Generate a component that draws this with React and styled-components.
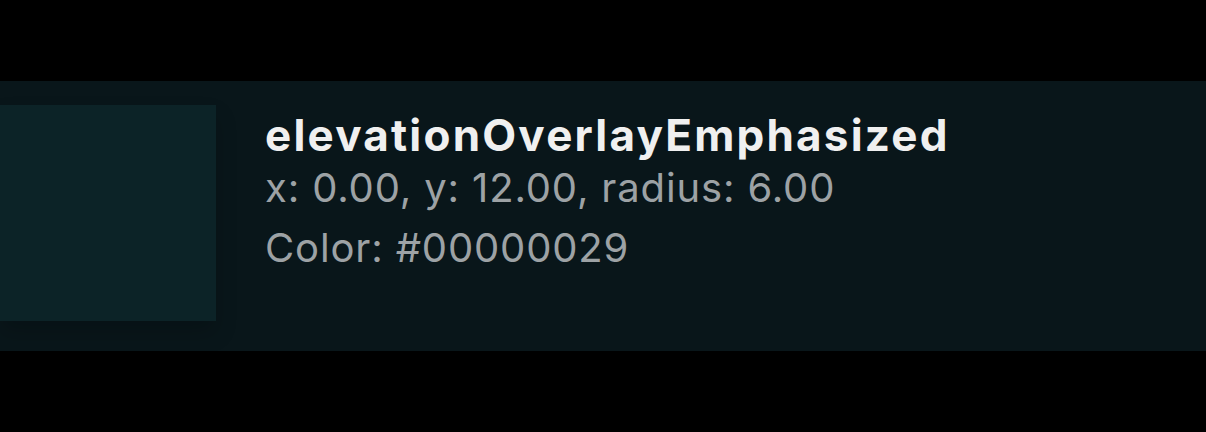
import React from "react";
import styled, { createGlobalStyle } from "styled-components";

const GlobalStyle = createGlobalStyle`
  html, body {
    margin: 0;
    padding: 0;
    background: #000;
  }
  body {
    font-family: Inter, "Noto Sans", sans-serif;
  }
`;

const Page = styled.div`
  width: 1206px;
  height: 432px;
  padding-top: 81px;
  box-sizing: border-box;
  background: #000;
`;

const Band = styled.div`
  height: 270px;
  background: #09161a;
  display: flex;
  align-items: flex-start;
  padding-top: 24px;
  box-sizing: border-box;
`;

const Swatch = styled.div`
  width: 216px;
  height: 216px;
  flex-shrink: 0;
  background: ${({ color }) => color};
  box-shadow: 0 12px 20px rgba(0, 0, 0, 0.18);
`;

const Info = styled.div`
  margin-left: 49px;
  display: flex;
  flex-direction: column;
`;

const Title = styled.div`
  font-size: 44px;
  font-weight: 700;
  line-height: 42px;
  letter-spacing: 2.2px;
  color: #f0f0f0;
  margin-top: 9px;
  margin-bottom: 2px;
  white-space: nowrap;
`;

const Detail = styled.div`
  font-size: 40px;
  font-weight: 400;
  line-height: 60px;
  letter-spacing: 0.85px;
  color: #9da2a5;
  white-space: nowrap;
`;

export default function App() {
  return (
    <>
      <GlobalStyle />
      <Page>
        <Band>
          <Swatch color="#0c2327" />
          <Info>
            <Title>elevationOverlayEmphasized</Title>
            <Detail>x: 0.00, y: 12.00, radius: 6.00</Detail>
            <Detail>Color: #00000029</Detail>
          </Info>
        </Band>
      </Page>
    </>
  );
}
